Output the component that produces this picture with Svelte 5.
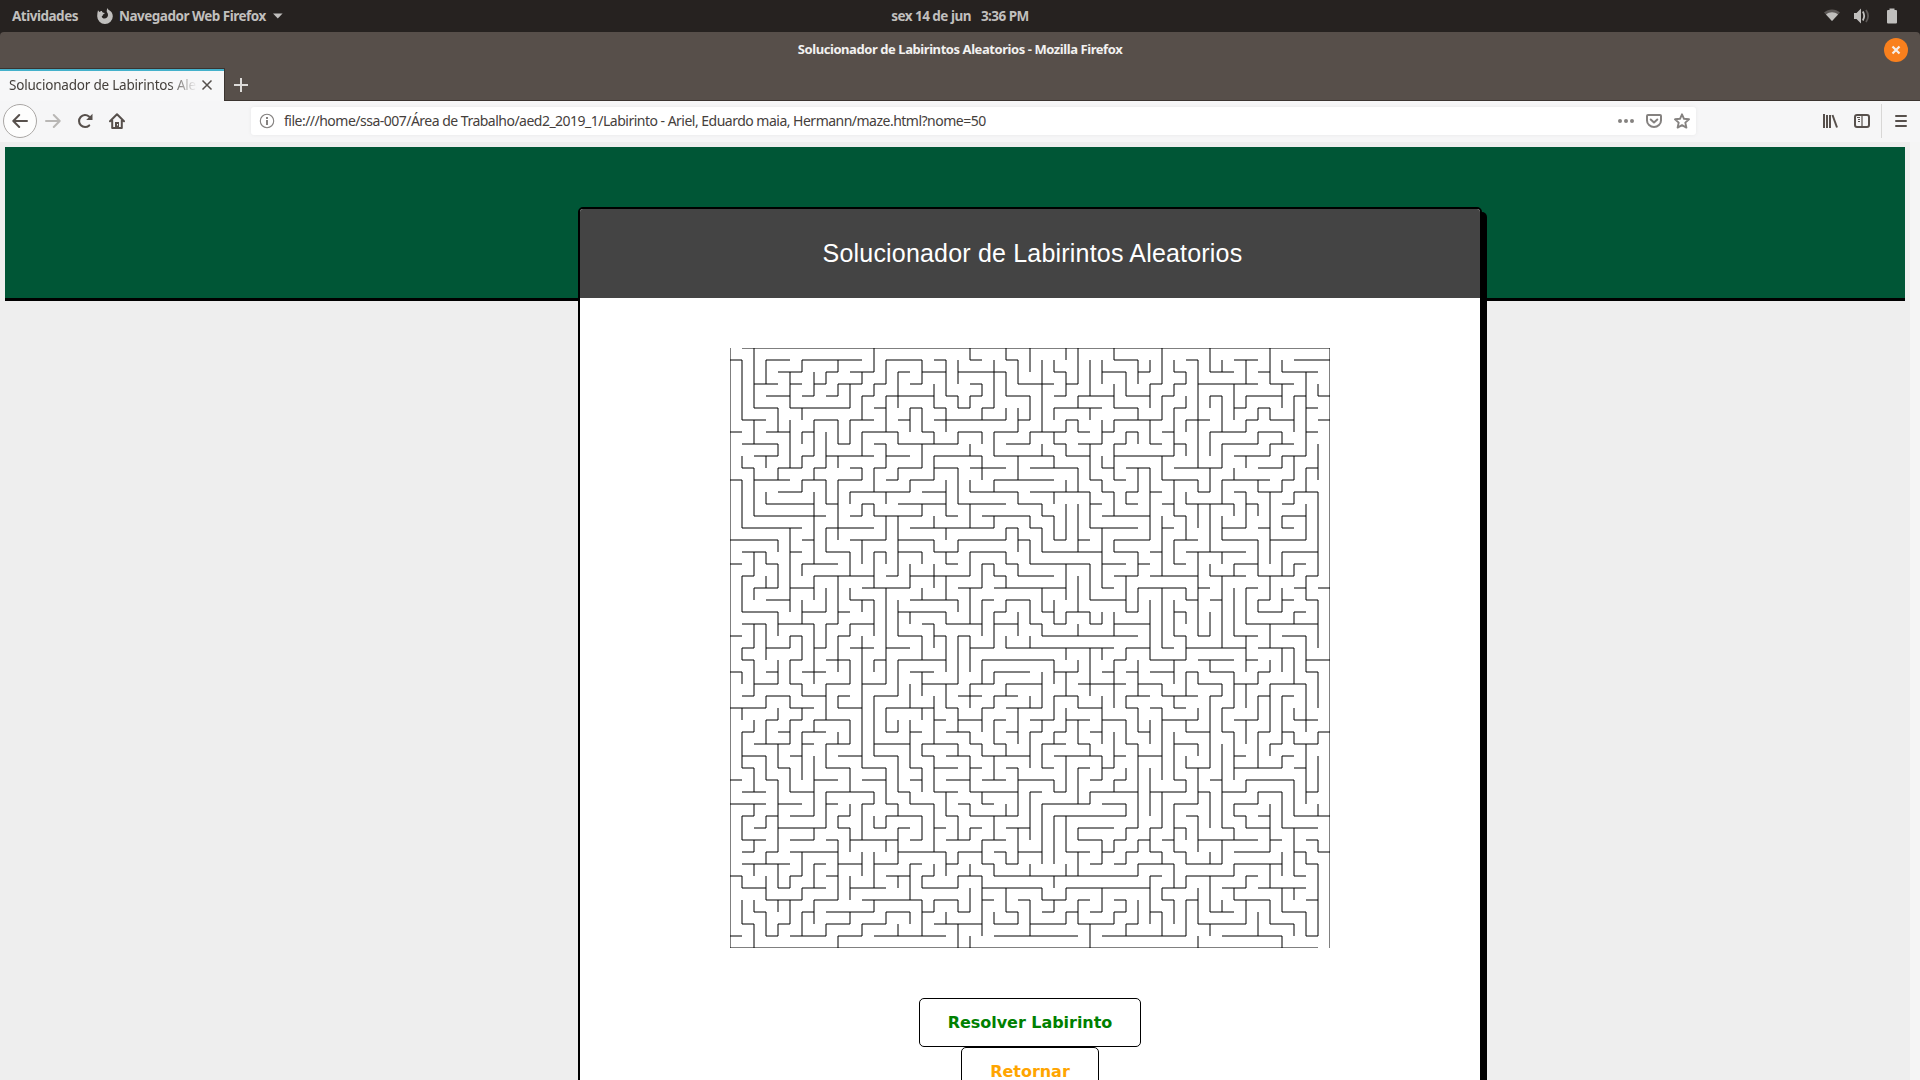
<script>
  const CELL = 12;

  // Horizontal wall runs, one entry per grid line from top to bottom ("from-to" columns).
  const rows = [
    '1-50',
    '0-1 3-5 6-11 13-16 17-18 20-21 23-24 32-34 38-39 42-44 47-50',
    '4-6 8-9 10-12 14-15 16-18 19-23 27-28 31-33 34-35 37-38 40-42 44-45 46-49',
    '2-4 5-6 7-8 9-11 12-13 15-16 20-21 24-27 28-29 35-36 37-38 39-44 45-47',
    '3-5 6-7 8-9 11-12 13-17 18-19 20-21 23-25 27-28 29-32 33-35 36-37 40-41 43-46 47-48 49-50',
    '2-4 5-10 12-13 15-16 17-18 19-20 21-22 27-31 32-34 37-38 42-43 44-45 48-49',
    '1-3 7-9 10-12 14-15 17-23 24-25 28-29 32-36 38-40 43-44 45-47 49-50',
    '0-1 3-5 6-7 11-14 16-17 19-21 22-24 25-28 29-30 31-32 33-34 36-37 40-43 44-46 48-49',
    '1-4 9-10 12-13 14-19 23-25 27-28 29-31 32-33 35-36 37-38 41-44 45-47',
    '2-4 6-7 8-12 13-15 17-21 22-27 28-30 32-37 42-45 46-48',
    '1-2 4-6 7-8 10-11 12-13 14-16 17-19 20-23 25-29 31-32 33-35 37-41 44-46 48-49',
    '0-1 2-5 6-8 9-11 13-14 15-17 22-27 30-31 32-33 36-39 41-45 46-47',
    '4-6 10-15 16-18 20-24 25-30 31-32 33-34 35-36 39-40 42-43 44-46 47-49',
    '3-7 8-9 11-12 14-18 19-23 24-26 30-31 33-34 36-37 38-42 43-44 46-47',
    '2-8 10-11 12-16 18-19 21-25 26-27 31-35 37-38 46-48',
    '1-6 8-12 15-22 23-24 25-26 30-34 36-37 41-43 44-45 46-47',
    '0-4 6-7 10-13 14-17 19-23 24-25 27-28 29-30 32-35 37-39 41-44 45-48',
    '1-3 5-6 8-10 12-13 14-16 17-19 20-23 26-31 32-34 35-36 38-43 46-49',
    '0-1 3-4 6-9 18-19 21-22 23-24 25-30 31-33 34-35 37-38 42-44 47-48',
    '1-2 7-12 13-14 15-20 22-23 24-27 32-34 35-39 40-43 44-47 48-49',
    '2-4 5-7 11-15 19-21 22-28 31-32 34-38 39-40 43-44 47-48 49-50',
    '3-5 10-12 15-19 21-22 23-25 30-33 38-39 40-41 44-45 46-47 48-49',
    '1-4 6-8 9-10 14-18 22-23 26-27 28-30 33-34 37-38 44-46 47-48',
    '1-3 4-7 8-9 10-12 16-17 18-21 22-24 25-26 27-28 30-31 32-35 43-49',
    '0-1 5-6 9-10 14-16 17-18 19-20 26-34 37-38 39-40 42-44 46-48',
    '1-2 3-5 7-8 10-12 13-15 20-22 23-32 33-35 36-37 38-43 44-47',
    '1-2 5-6 8-10 12-13 14-18 21-27 32-33 35-38 39-42 43-44 48-50',
    '0-1 3-4 6-8 15-17 22-25 27-29 31-32 33-34 35-37 38-39 40-42 44-45 48-49',
    '2-4 5-6 8-10 11-13 16-19 20-22 23-26 29-33 34-36 39-41 42-44 45-48',
    '1-2 3-5 6-8 9-10 12-14 19-21 22-24 27-29 33-35 36-39 40-41 44-45 46-47',
    '0-3 5-7 9-11 13-17 18-19 21-22 23-26 29-31 33-34 35-36 37-38 41-42',
    '3-4 5-6 7-10 17-18 19-21 22-23 25-27 28-30 31-33 36-39 42-44 47-49',
    '1-2 4-5 6-8 13-14 15-16 18-20 23-24 25-26 27-28 30-31 34-35 38-40 41-42 44-45 46-47 49-50',
    '2-5 6-7 8-10 12-15 16-19 20-21 22-23 26-28 29-30 33-34 37-39 45-46 47-49',
    '1-3 5-6 9-11 12-14 16-17 18-20 21-25 27-31 32-33 34-36 42-43 46-47',
    '1-2 4-5 8-10 11-13 15-16 17-19 20-21 23-24 26-27 29-30 31-32 38-40 42-46 47-48',
    '0-1 3-4 7-9 11-13 15-16 18-20 21-23 24-27 30-31 32-33 37-38 40-41 43-47',
    '1-3 5-7 8-12 14-15 17-19 20-24 25-26 27-28 30-34 35-38 39-40 41-43 44-46 48-49',
    '0-3 4-6 8-9 11-12 13-14 15-17 19-20 21-22 26-30 31-33 37-39 42-44',
    '1-2 3-4 5-7 9-10 13-16 18-19 20-24 27-33 38-39 42-43 44-45 47-50',
    '2-3 4-8 9-10 12-13 14-15 17-18 20-21 23-25 29-32 33-34 35-36 37-38 41-42 43-45 46-49',
    '1-3 5-7 8-9 10-14 15-16 18-20 21-23 29-31 32-33 34-35 36-37 39-44 45-46 48-49',
    '1-2 3-4 5-9 14-18 19-21 22-23 24-26 28-30 31-32 33-34 35-36 37-38 42-45 47-48 49-50',
    '1-5 7-8 9-11 12-14 15-16 18-19 21-22 23-24 30-31 32-33 34-37 38-41 42-46 48-49',
    '0-1 5-6 8-9 13-15 16-17 19-21 22-34 35-36 38-42 43-44 47-48',
    '1-3 4-5 6-8 10-13 16-19 21-26 28-35 36-38 41-43 44-48',
    '3-6 7-9 11-16 17-19 21-22 24-25 26-28 29-30 32-33 36-37 38-39 42-45 48-49',
    '2-3 6-7 8-12 13-15 16-17 19-20 23-24 26-27 28-29 30-31 32-33 35-36 40-42 46-48',
    '1-2 4-5 8-10 11-13 17-21 22-24 25-28 29-32 33-34 39-43 45-47',
    '0-1 3-4 5-8 9-11 12-18 22-29 31-38 41-46 48-49',
    '0-49'
  ];

  // Vertical wall runs, one entry per grid line from left to right ("from-to" rows).
  const cols = [
    '0-50',
    '1-6 9-10 11-15 19-22 25-26 27-28 30-31 32-35 39-41 44-45 46-48',
    '0-5 6-8 10-14 17-19 20-21 23-25 26-29 31-32 35-37 38-39 41-42 43-44 46-47 48-50',
    '1-3 9-10 12-13 17-18 19-20 23-26 29-30 31-33 34-36 39-40 42-43 44-46 47-49',
    '5-7 8-9 10-11 16-17 18-20 22-24 26-28 30-31 33-35 36-42 43-45 46-47 48-49',
    '2-5 6-10 15-22 24-25 26-28 29-30 31-33 35-37 44-45 46-48',
    '1-2 5-6 7-8 9-10 11-12 18-19 21-23 24-26 28-29 30-31 32-36 42-44 45-46 47-49',
    '2-4 6-9 10-11 12-18 19-21 23-28 31-32 34-39 40-41 43-45 46-48',
    '2-3 7-10 11-13 15-17 20-22 23-25 28-31 33-35 37-40 48-49',
    '1-2 3-4 6-8 9-10 11-16 19-23 24-27 29-30 32-33 39-40 41-46 49-50',
    '3-5 6-8 12-13 17-19 20-21 23-24 26-28 31-33 35-37 38-39 40-42 44-46 47-48',
    '2-3 4-6 7-9 10-11 13-14 16-18 21-22 24-35 38-41 42-44 48-49',
    '0-2 3-4 10-12 13-14 17-20 21-24 26-27 29-34 37-38 39-40 42-45 46-47',
    '1-3 4-7 8-10 12-13 14-16 17-18 20-28 30-32 35-38 39-40 41-42 47-48',
    '2-5 7-8 10-11 14-19 21-24 26-29 31-32 34-37 38-39 40-43 44-45 48-49',
    '5-7 11-12 18-20 22-23 28-30 31-35 37-38 43-46 47-48',
    '1-3 5-7 8-10 13-14 17-18 20-21 24-26 27-29 30-31 33-34 35-37 39-41 44-45 46-49',
    '3-5 7-8 9-11 14-15 16-17 18-20 23-25 29-33 34-37 38-42 43-44 46-47',
    '1-4 5-7 11-14 15-16 17-18 19-21 22-23 24-27 28-30 37-39 42-44 47-48',
    '1-3 4-5 7-8 10-13 16-17 21-22 24-28 30-32 33-34 39-41 42-43 44-45 46-47 48-50',
    '0-1 4-5 8-9 11-12 13-15 17-19 20-23 24-27 28-30 32-33 34-37 38-39 40-41 43-44 45-47 49-50',
    '3-4 5-6 7-8 9-11 18-20 21-24 26-28 30-32 33-34 37-38 41-43 44-49',
    '1-5 7-9 11-12 14-15 18-19 22-25 27-28 29-30 31-33 34-36 39-41 43-44 47-48',
    '0-1 2-4 5-6 15-16 17-18 19-20 21-22 24-25 28-29 33-34 38-39 42-43 45-47',
    '1-3 5-7 9-11 12-13 15-17 18-19 22-24 30-33 35-39 40-43 47-48',
    '0-2 4-6 7-8 14-15 16-18 21-23 24-25 29-30 32-35 37-41 43-44 46-49',
    '1-7 8-9 13-14 15-17 20-22 23-24 27-30 31-32 33-35 38-43 45-46',
    '1-2 5-6 7-8 9-10 12-13 14-16 21-23 26-28 29-31 32-33 36-37 39-43 44-45 46-47',
    '0-1 2-4 6-7 8-9 11-12 13-16 18-21 22-23 25-26 27-29 30-32 34-37 39-42 43-44 45-46 47-48',
    '0-3 4-5 6-7 10-12 13-17 19-22 23-24 26-27 29-30 31-33 35-38 40-41 42-44 46-48',
    '1-4 5-6 8-11 12-15 18-21 22-23 25-29 33-34 37-38 48-50',
    '1-3 6-8 9-10 11-12 15-20 22-23 25-26 29-33 34-36 41-43 45-47',
    '0-1 3-5 6-7 8-11 12-14 16-17 22-24 26-30 32-35 36-37 41-42 47-48',
    '2-4 7-8 12-13 19-22 25-26 29-30 31-33 35-36 38-39 40-41 42-43 46-47 48-49',
    '1-3 5-6 7-8 10-12 17-19 20-22 26-29 30-32 33-40 41-42 43-44 46-48',
    '1-2 3-5 6-8 10-16 21-26 31-33 35-39 40-42 44-48',
    '0-3 4-6 9-11 14-19 20-25 28-29 30-36 37-40 42-43 45-46 47-49',
    '1-2 3-4 5-9 11-14 16-18 21-24 26-28 29-30 32-36 38-42 43-45 46-48',
    '2-3 4-5 6-7 8-9 12-13 14-16 20-21 22-23 24-26 27-29 31-32 34-35 36-37 40-41 42-43 44-45 46-49',
    '1-10 11-12 13-15 17-24 27-28 30-31 33-34 35-38 39-42 45-48 49-50',
    '0-2 4-5 7-9 10-12 13-17 18-19 22-24 26-27 29-35 37-40 42-43 44-47 48-49',
    '1-2 4-7 8-10 11-13 14-16 17-18 19-25 28-29 30-32 33-40 41-43 46-47',
    '3-6 10-11 13-14 18-19 20-24 27-30 32-36 38-39 40-41 43-44 45-46',
    '1-3 4-5 6-7 9-10 12-15 20-23 24-27 28-30 31-33 36-37 39-40 44-45 46-48',
    '5-6 7-8 11-12 13-14 16-19 21-22 27-28 29-31 32-35 37-38 47-49',
    '0-3 5-6 8-9 12-18 19-21 23-25 26-27 28-32 33-34 38-42 43-45 46-48',
    '1-2 3-5 7-8 9-10 11-12 14-15 17-19 20-22 25-27 29-33 34-35 37-40 42-44 45-47 49-50',
    '4-7 9-11 12-13 18-19 22-23 25-28 30-31 32-33 36-39 40-44 45-46 48-49',
    '2-9 10-12 13-16 19-21 24-27 28-32 33-38 42-43 47-49',
    '3-4 8-11 12-19 21-25 27-30 32-33 34-37 38-39 41-42 43-49',
    '0-50'
  ];

  const runs = (line) => line.split(' ').map((run) => run.split('-').map((n) => Number(n) * CELL));
  const horizontal = rows
    .flatMap((line, r) => runs(line).map(([a, b]) => `M${a} ${r * CELL}H${b}`))
    .join('');
  const vertical = cols
    .flatMap((line, c) => runs(line).map(([a, b]) => `M${c * CELL} ${a}V${b}`))
    .join('');
</script>

<div class="desktop">
  <header class="panel">
    <div class="panel-left">
      <span class="activities">Atividades</span>
      <svg class="fox" width="16" height="16" viewBox="0 0 16 16">
        <path fill="#c0bfbd" d="M1 2.2 2.4 4C3.2 3.2 4 2.8 5 2.7 4.9 3.8 5.5 4.6 7 4.8 8 5 7.900 5.700 6.500 6.200 5.700 6.500 5.800 7.200 5.800 7.700 4.500 7.600 4.400 9 5.700 9.900c1.500 1 3.200.4 4.300-.5C11.500 8 11.200 5.500 10 4.200 9.500 3.500 9.700 1.300 10.500 0c.3 1.200 1 1.900 2.100 2.500C14.500 3.600 15.800 5.600 15.800 8.300A7.800 7.700 0 0 1 8 16 7.700 7.700 0 0 1 .2 8.300C.2 6 .5 3.900 1 2.200Z" />
      </svg>
      <span class="app-name">Navegador Web Firefox</span>
      <svg class="caret" width="10" height="6" viewBox="0 0 10 6"><path fill="#c0bfbd" d="M0 .5h9.600L4.800 5.500Z" /></svg>
    </div>
    <div class="clock"><span>sex 14 de jun</span><span>3:36 PM</span></div>
    <div class="status">
      <svg width="16" height="16" viewBox="0 0 16 16">
        <path fill="#5c5856" d="M0 4.500C4.500.6 11.500.6 16 4.500L8 13Z" />
        <path fill="#c0bfbd" d="M2 6.500C5.500 3.600 10.500 3.600 14 6.500L8 13Z" />
      </svg>
      <svg width="16" height="16" viewBox="0 0 16 16">
        <path fill="#c0bfbd" d="M0 5h2.500L7 .500v15L2.500 11H0Z" />
        <path fill="none" stroke="#c0bfbd" stroke-width="1.800" d="M8.800 3.600Q11.600 8 8.800 12.400" />
        <path fill="none" stroke="#5c5856" stroke-width="1.800" d="M12 2Q16.200 8 12 14" />
      </svg>
      <svg width="16" height="16" viewBox="0 0 16 16">
        <path fill="#c0bfbd" d="M5.500.500h5V2H12q1 0 1 1v11.500q0 1-1 1H4q-1 0-1-1V3q0-1 1-1h1.500Z" />
      </svg>
    </div>
  </header>

  <div class="window">
    <div class="titlebar">
      <span class="window-title">Solucionador de Labirintos Aleatorios - Mozilla Firefox</span>
      <div class="close">
        <svg width="24" height="24" viewBox="0 0 24 24"><path stroke="#f6eee8" stroke-width="2.200" d="m8.500 8.500 7 7m0-7-7 7" /></svg>
      </div>
    </div>

    <div class="tabs">
      <div class="tab">
        <span class="tab-title">Solucionador de Labirintos Aleatorios</span>
        <svg width="12" height="12" viewBox="0 0 12 12"><path stroke="#55504c" stroke-width="1.500" d="m1.500 1.500 9 9m0-9-9 9" /></svg>
      </div>
      <svg class="plus" width="14" height="14" viewBox="0 0 14 14"><path stroke="#dddbd9" stroke-width="2" d="M7 0v14M0 7h14" /></svg>
    </div>

    <div class="toolbar">
      <div class="back">
        <svg width="16" height="16" viewBox="0 0 16 16"><path fill="none" stroke="#57504c" stroke-width="2" stroke-linecap="round" stroke-linejoin="round" d="M15 8H1.500M7.200 2 1.300 8l5.900 6" /></svg>
      </div>
      <svg class="forward" width="16" height="16" viewBox="0 0 16 16"><path fill="none" stroke="#b9b7b5" stroke-width="2" stroke-linecap="round" stroke-linejoin="round" d="M1 8h13.500M8.800 2l5.900 6-5.900 6" /></svg>
      <svg class="reload" width="16" height="16" viewBox="0 0 16 16">
        <path fill="none" stroke="#57504c" stroke-width="2.100" stroke-linecap="round" d="M12.200 12.400A6 6 0 1 1 12 3.500" />
        <path fill="#57504c" d="M15.500.800V7H9.200Z" />
      </svg>
      <svg class="home" width="16" height="16" viewBox="0 0 16 16">
        <path fill="none" stroke="#57504c" stroke-width="2" stroke-linecap="round" stroke-linejoin="round" d="m1 8.300 7-7 7 7M3.200 7.500V15h9.600V7.500" />
        <path fill="#57504c" d="M6 9h4v6H6Z" />
        <path fill="#f6f6f7" d="M8 11h1v1.500H8Z" />
      </svg>
      <div class="urlbar">
        <svg class="info" width="16" height="16" viewBox="0 0 16 16">
          <circle cx="8" cy="8" r="6.700" fill="none" stroke="#858280" stroke-width="1.100" />
          <path fill="#858280" d="M7 4h2v2H7ZM7 7h2v5H7Z" />
        </svg>
        <span class="url">file:///home/ssa-007/Área de Trabalho/aed2_2019_1/Labirinto - Ariel, Eduardo maia, Hermann/maze.html?nome=50</span>
        <svg width="16" height="16" viewBox="0 0 16 16" fill="#858280"><circle cx="2" cy="8" r="2" /><circle cx="8" cy="8" r="2" /><circle cx="14" cy="8" r="2" /></svg>
        <svg width="16" height="16" viewBox="0 0 16 16" fill="none" stroke="#858280" stroke-width="2" stroke-linecap="round" stroke-linejoin="round">
          <path d="M2 2h12q1 0 1 1v4.500a7 6.500 0 0 1-14 0V3q0-1 1-1Z" /><path d="m4.700 6.500 3.300 3 3.300-3" />
        </svg>
        <svg width="16" height="16" viewBox="0 0 16 16" fill="none" stroke="#858280" stroke-width="1.900" stroke-linejoin="round">
          <path d="m8 1.300 2 4.500 5 .500-3.700 3.300 1.100 5L8 12.100l-4.400 2.500 1.100-5L1 6.300l5-.5Z" />
        </svg>
      </div>
      <svg class="library" width="16" height="16" viewBox="0 0 16 16" stroke="#57504c" stroke-width="2"><path d="M2 1v14M5 2v13" /><path d="M8 2v13" /><path d="m10.500 2 4.500 12.500" /></svg>
      <svg class="sidebar" width="16" height="16" viewBox="0 0 16 16" fill="none" stroke="#57504c">
        <rect x="1" y="2" width="14" height="12" rx="2" stroke-width="2" /><path d="M8 2v12" stroke-width="1.200" /><path d="M3 4.500h3M4 6.500h2M4 8.500h2" />
      </svg>
      <i class="rule"></i>
      <svg class="menu" width="12" height="14" viewBox="0 0 12 14" stroke="#57504c" stroke-width="2" stroke-linecap="round"><path d="M1 2h10M1 7h10M1 12h10" /></svg>
    </div>

    <div class="viewport">
      <div class="page">
        <div class="band"></div>
        <main class="card">
          <h1>Solucionador de Labirintos Aleatorios</h1>
          <svg class="maze" width="600" height="600" viewBox="0 0 600 600" fill="none" stroke="#000" stroke-width="1">
            <path d={horizontal} />
            <path d={vertical} />
          </svg>
          <button class="solve">Resolver Labirinto</button>
          <button class="back-home">Retornar</button>
        </main>
      </div>
      <div class="scrollbar"></div>
    </div>
  </div>
</div>

<style>
  :global(body) {
    margin: 0;
    overflow: hidden;
  }
  .desktop {
    width: 1920px;
    height: 1080px;
    overflow: hidden;
    display: flex;
    flex-direction: column;
    background: #262220;
    font-family: 'Noto Sans', 'Open Sans', sans-serif;
    font-size: 14px;
    color: #45403c;
    white-space: nowrap;
  }
  svg {
    display: block;
    flex: none;
  }
  .panel {
    height: 32px;
    flex: none;
    display: grid;
    grid-template-columns: 1fr auto 1fr;
    align-items: center;
    color: #c0bfbd;
    font-weight: 700;
    font-size: 13.500px;
  }
  .panel-left {
    display: flex;
    align-items: center;
    padding-left: 12px;
  }
  .activities {
    width: 85px;
    letter-spacing: -0.500px;
  }
  .app-name {
    width: 154px;
    margin-left: 6px;
    letter-spacing: -0.500px;
  }
  .clock {
    display: flex;
    gap: 10px;
    letter-spacing: -0.520px;
  }
  .status {
    display: flex;
    justify-content: flex-end;
    gap: 14px;
    padding-right: 20px;
  }
  .window {
    flex: 1;
    display: flex;
    flex-direction: column;
    background: #574f4a;
    border-radius: 4px 4px 0 0;
  }
  .titlebar {
    height: 36px;
    flex: none;
    display: grid;
    grid-template-columns: 1fr auto 1fr;
    align-items: center;
    color: #f2f1f0;
    font-weight: 700;
    font-size: 13px;
  }
  .window-title {
    grid-column: 2;
    padding-bottom: 2px;
    letter-spacing: -0.430px;
  }
  .close {
    justify-self: end;
    margin-right: 12px;
    border-radius: 50%;
    background: #f9801d;
  }
  .tabs {
    height: 33px;
    flex: none;
    display: flex;
    align-items: center;
    box-shadow: inset 0 -1px #3b3430;
  }
  .tab {
    box-sizing: border-box;
    width: 225px;
    height: 33px;
    display: flex;
    align-items: center;
    gap: 4px;
    padding-left: 9px;
    background: linear-gradient(#45b1cb 0 2px, #f7f7f8 2px);
    border-top: 1px solid #3b3430;
    border-right: 1px solid #3b3430;
  }
  .tab-title {
    width: 188px;
    overflow: hidden;
    padding-bottom: 1px;
    font-size: 13.500px;
    letter-spacing: -0.200px;
    mask-image: linear-gradient(90deg, #000 160px, transparent 188px);
  }
  .plus {
    margin-left: 9px;
  }
  .toolbar {
    box-sizing: border-box;
    height: 41px;
    padding-bottom: 1px;
    flex: none;
    display: flex;
    align-items: center;
    background: #f6f6f7;
  }
  .back {
    box-sizing: border-box;
    width: 34px;
    height: 34px;
    margin-left: 3px;
    display: grid;
    place-items: center;
    border: 1px solid #aaa7a5;
    border-radius: 50%;
    background: #fdfdfd;
  }
  .forward {
    margin-left: 8px;
  }
  .reload {
    margin-left: 16px;
  }
  .home {
    margin-left: 16px;
  }
  .urlbar {
    box-sizing: border-box;
    width: 1445px;
    height: 28px;
    margin-left: 126px;
    padding: 0 6px 0 8px;
    display: flex;
    align-items: center;
    gap: 12px;
    background: #fff;
    border-radius: 3px;
    box-shadow: 0 0 4px rgba(0, 0, 0, 0.060);
  }
  .url {
    flex: 1;
    margin-left: -3px;
    padding-bottom: 1px;
    letter-spacing: -0.510px;
  }
  .library {
    margin-left: 126px;
  }
  .sidebar {
    margin-left: 16px;
  }
  .rule {
    width: 1px;
    height: 34px;
    margin-left: 11px;
    background: #d8d7d6;
  }
  .menu {
    margin-left: 13px;
  }
  .viewport {
    flex: 1;
    min-height: 0;
    display: flex;
    overflow: hidden;
    background: #eee;
  }
  .page {
    width: 1900px;
    padding: 5px 5px 0;
  }
  .band {
    height: 151px;
    background: #005636;
    border-bottom: 3px solid #000;
  }
  .card {
    position: relative;
    width: 900px;
    height: 1100px;
    margin: -94px 0 0 573px;
    display: flex;
    flex-direction: column;
    align-items: center;
    background: #fff;
    border: 2px solid #000;
    border-radius: 5px;
    box-shadow: 5px 5px #000;
  }
  h1 {
    align-self: stretch;
    height: 89px;
    margin: 0;
    padding-left: 5px;
    background: #444;
    color: #fff;
    font: 400 25px/89px 'Liberation Sans', Arial, sans-serif;
    letter-spacing: 0.190px;
    text-align: center;
    border-radius: 3px 3px 0 0;
  }
  .maze {
    margin: 50px 0;
  }
  button {
    box-sizing: border-box;
    height: 49px;
    padding: 0;
    border: 1px solid #000;
    border-radius: 5px;
    background: #fff;
    font: 700 16px 'DejaVu Sans', sans-serif;
    letter-spacing: -0.040px;
  }
  .solve {
    width: 222px;
    color: #008000;
  }
  .back-home {
    width: 138px;
    color: #ffa500;
  }
  .scrollbar {
    width: 10px;
    background: #f5f5f5;
  }
</style>
